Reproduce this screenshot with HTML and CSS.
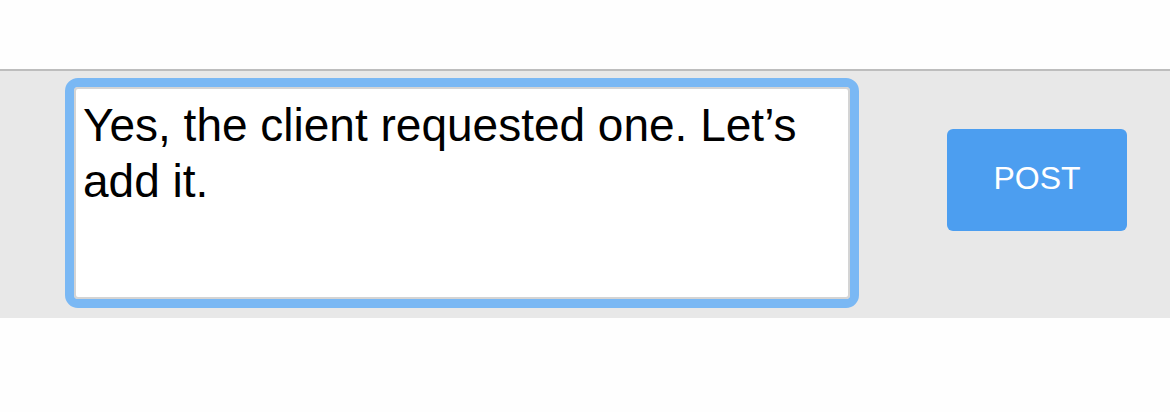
FILE: index.html
```html
<!DOCTYPE html>
<html lang="en">
<head>
    <meta charset="UTF-8">
    <meta name="viewport" content="width=device-width, initial-scale=1.0">
    <title>Reply</title>
    <link rel="stylesheet" href="styles.css">
</head>
<body>
    <div class="top"></div>
    <div class="composer">
        <div class="field">
            <div class="input">Yes, the client requested one. Let’s add it.</div>
        </div>
        <button class="button">POST</button>
    </div>
</body>
</html>
```

FILE: styles.css
```css
body {
    font-family: "Liberation Sans", Arial, sans-serif;
    background-color: #fefefe;
    margin: 0;
}

.top {
    height: 69px;
}

.composer {
    display: flex;
    align-items: flex-start;
    gap: 88px;
    height: 247px;
    padding-left: 65px;
    background-color: #e8e8e8;
    border-top: 2px solid #bdbdbd;
}

.field {
    margin-top: 7px;
    border: 9px solid #7ab8f4;
    border-radius: 13px;
}

.input {
    box-sizing: border-box;
    width: 776px;
    height: 212px;
    padding: 8px 7px;
    background-color: #fff;
    border: 2px solid #d4d4d4;
    border-radius: 4px;
    color: #000;
    font-size: 46px;
    line-height: 56px;
}

.button {
    display: flex;
    align-items: center;
    justify-content: center;
    margin-top: 58px;
    width: 180px;
    height: 102px;
    padding: 0 0 4px;
    font-family: "Liberation Sans", Arial, sans-serif;
    font-size: 32px;
    background-color: #4c9ef0;
    color: white;
    border: none;
    border-radius: 6px;
}
```
